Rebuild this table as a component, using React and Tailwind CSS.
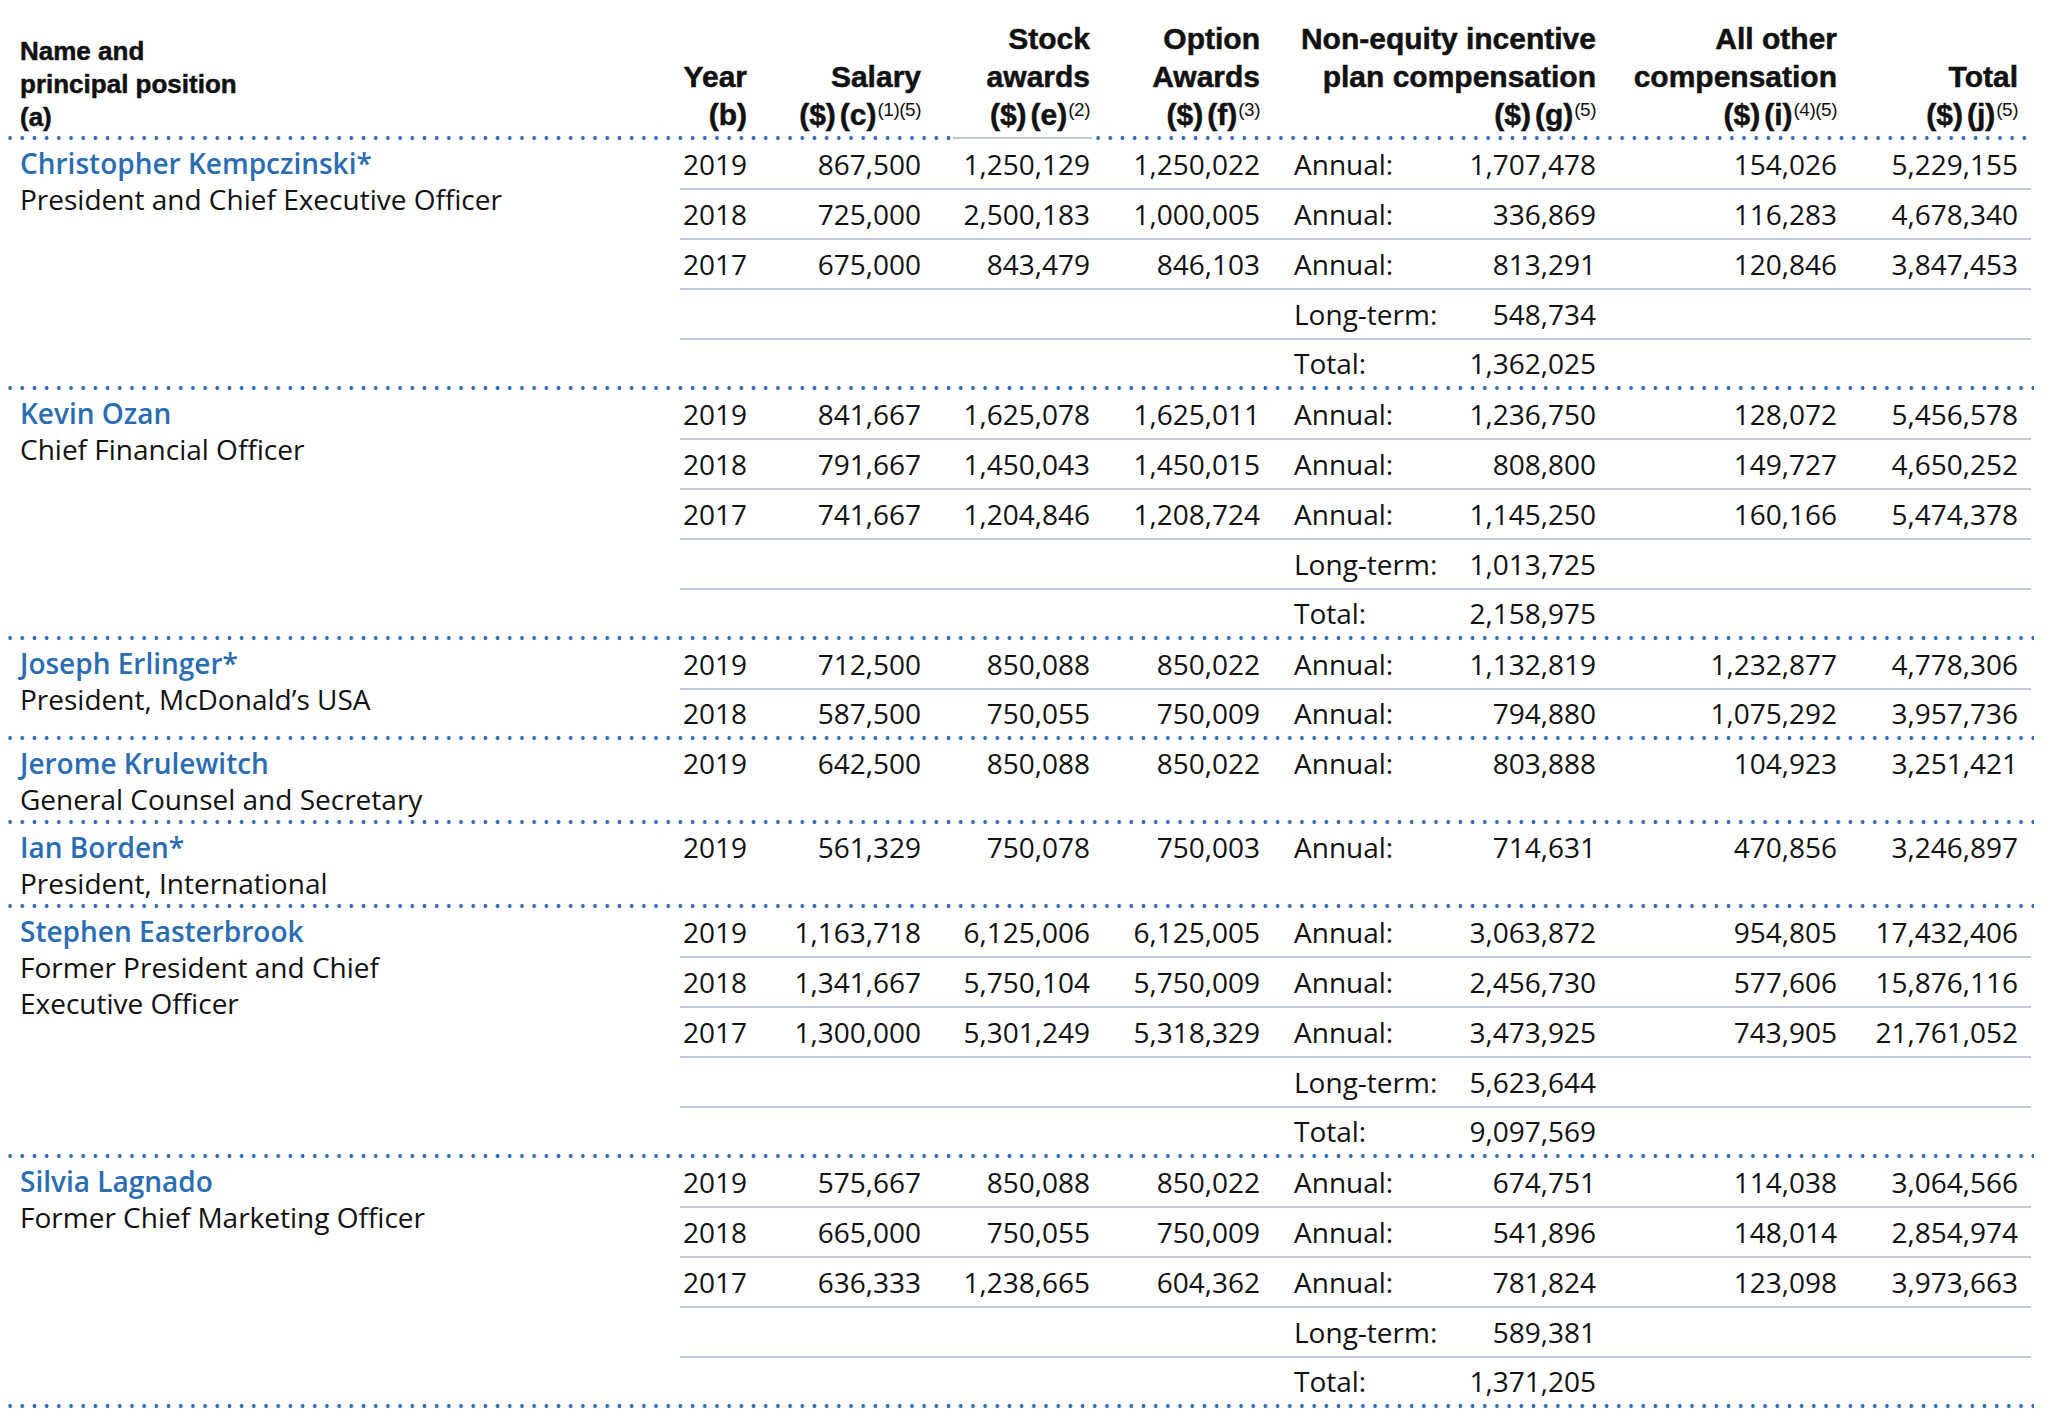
import React from "react";

const people = [
  {
    name: "Christopher Kempczinski*",
    title: ["President and Chief Executive Officer"],
    rows: [
      ["2019", "867,500", "1,250,129", "1,250,022", "Annual:", "1,707,478", "154,026", "5,229,155"],
      ["2018", "725,000", "2,500,183", "1,000,005", "Annual:", "336,869", "116,283", "4,678,340"],
      ["2017", "675,000", "843,479", "846,103", "Annual:", "813,291", "120,846", "3,847,453"],
      ["", "", "", "", "Long-term:", "548,734", "", ""],
      ["", "", "", "", "Total:", "1,362,025", "", ""],
    ],
  },
  {
    name: "Kevin Ozan",
    title: ["Chief Financial Officer"],
    rows: [
      ["2019", "841,667", "1,625,078", "1,625,011", "Annual:", "1,236,750", "128,072", "5,456,578"],
      ["2018", "791,667", "1,450,043", "1,450,015", "Annual:", "808,800", "149,727", "4,650,252"],
      ["2017", "741,667", "1,204,846", "1,208,724", "Annual:", "1,145,250", "160,166", "5,474,378"],
      ["", "", "", "", "Long-term:", "1,013,725", "", ""],
      ["", "", "", "", "Total:", "2,158,975", "", ""],
    ],
  },
  {
    name: "Joseph Erlinger*",
    title: ["President, McDonald’s USA"],
    rows: [
      ["2019", "712,500", "850,088", "850,022", "Annual:", "1,132,819", "1,232,877", "4,778,306"],
      ["2018", "587,500", "750,055", "750,009", "Annual:", "794,880", "1,075,292", "3,957,736"],
    ],
  },
  {
    name: "Jerome Krulewitch",
    title: ["General Counsel and Secretary"],
    rows: [
      ["2019", "642,500", "850,088", "850,022", "Annual:", "803,888", "104,923", "3,251,421"],
    ],
  },
  {
    name: "Ian Borden*",
    title: ["President, International"],
    rows: [
      ["2019", "561,329", "750,078", "750,003", "Annual:", "714,631", "470,856", "3,246,897"],
    ],
  },
  {
    name: "Stephen Easterbrook",
    title: ["Former President and Chief", "Executive Officer"],
    rows: [
      ["2019", "1,163,718", "6,125,006", "6,125,005", "Annual:", "3,063,872", "954,805", "17,432,406"],
      ["2018", "1,341,667", "5,750,104", "5,750,009", "Annual:", "2,456,730", "577,606", "15,876,116"],
      ["2017", "1,300,000", "5,301,249", "5,318,329", "Annual:", "3,473,925", "743,905", "21,761,052"],
      ["", "", "", "", "Long-term:", "5,623,644", "", ""],
      ["", "", "", "", "Total:", "9,097,569", "", ""],
    ],
  },
  {
    name: "Silvia Lagnado",
    title: ["Former Chief Marketing Officer"],
    rows: [
      ["2019", "575,667", "850,088", "850,022", "Annual:", "674,751", "114,038", "3,064,566"],
      ["2018", "665,000", "750,055", "750,009", "Annual:", "541,896", "148,014", "2,854,974"],
      ["2017", "636,333", "1,238,665", "604,362", "Annual:", "781,824", "123,098", "3,973,663"],
      ["", "", "", "", "Long-term:", "589,381", "", ""],
      ["", "", "", "", "Total:", "1,371,205", "", ""],
    ],
  },
];

function Dotted({ className }) {
  return (
    <div
      className={
        "h-[4px] bg-[radial-gradient(circle,#2f6db3_1.7px,transparent_2.1px)] bg-[length:12.2px_4px] bg-repeat-x " +
        className
      }
    />
  );
}

function Sup({ children }) {
  return (
    <span className="relative -top-[9px] align-baseline text-[19px] font-normal leading-none ml-[1px] tracking-[-0.5px] [-webkit-text-stroke:0px]">
      {children}
    </span>
  );
}

function Unit({ letter, sup }) {
  return (
    <>
      ($)<span className="ml-[4px]">({letter})</span>
      {sup ? <Sup>{sup}</Sup> : null}
    </>
  );
}

function HeadCol({ w, lines }) {
  return (
    <div className={"flex flex-col justify-end items-end text-right " + w}>
      {lines.map((l, i) => (
        <div key={i} className="h-[38px] leading-[38px] whitespace-nowrap">
          {l}
        </div>
      ))}
    </div>
  );
}

function DataRow({ r, last }) {
  return (
    <div
      className={
        last
          ? "flex items-center h-[46px] pr-[13px]"
          : "flex items-center h-[50px] border-b-2 border-[#bcc8dc] pr-[13px]"
      }
    >
      <div className="w-[67px] text-right">{r[0]}</div>
      <div className="w-[174px] text-right">{r[1]}</div>
      <div className="w-[169px] text-right">{r[2]}</div>
      <div className="w-[170px] text-right">{r[3]}</div>
      <div className="w-[336px] pl-[34px] flex justify-between">
        <span>{r[4]}</span>
        <span>{r[5]}</span>
      </div>
      <div className="w-[241px] text-right">{r[6]}</div>
      <div className="w-[181px] text-right">{r[7]}</div>
    </div>
  );
}

function Section({ p }) {
  return (
    <div className="flex">
      <div className="w-[680px] pl-[20px] pt-[5px] pb-[3px] leading-[36px]">
        <div className="font-semibold text-[#2a6db3]">{p.name}</div>
        {p.title.map((t, i) => (
          <div key={i}>{t}</div>
        ))}
      </div>
      <div className="w-[1351px] flex flex-col">
        {p.rows.map((r, i) => (
          <DataRow key={i} r={r} last={i === p.rows.length - 1} />
        ))}
      </div>
    </div>
  );
}

export default function App() {
  return (
    <div className="w-[2048px] min-h-[1414px] bg-white text-[#111111]">
      {/* Header */}
      <div className="flex pt-[20px] pb-[2px] font-['Liberation_Sans',Arial,sans-serif] font-bold [-webkit-text-stroke:0.5px_#111111]">
        <div className="w-[680px] pl-[20px] flex flex-col justify-end text-[26px] leading-[33px]">
          <div>Name and</div>
          <div>principal position</div>
          <div>(a)</div>
        </div>
        <div className="flex text-[30px]">
          <HeadCol w="w-[67px]" lines={["Year", "(b)"]} />
          <HeadCol w="w-[174px]" lines={["Salary", <Unit letter="c" sup="(1)(5)" />]} />
          <HeadCol w="w-[169px]" lines={["Stock", "awards", <Unit letter="e" sup="(2)" />]} />
          <HeadCol w="w-[170px]" lines={["Option", "Awards", <Unit letter="f" sup="(3)" />]} />
          <HeadCol
            w="w-[336px]"
            lines={["Non-equity incentive", "plan compensation", <Unit letter="g" sup="(5)" />]}
          />
          <HeadCol
            w="w-[241px]"
            lines={["All other", "compensation", <Unit letter="i" sup="(4)(5)" />]}
          />
          <HeadCol w="w-[181px]" lines={["Total", <Unit letter="j" sup="(5)" />]} />
        </div>
      </div>
      <div className="flex items-center ml-[4px]">
        <Dotted className="w-[949px]" />
        <div className="w-[139px] h-[2px] bg-[#bcc8dc]" />
        <Dotted className="w-[942px]" />
      </div>

      {/* Body */}
      <div className="font-['Open_Sans',sans-serif] text-[28px] leading-[36px]">
        {people.map((p, i) => (
          <div key={i}>
            <Section p={p} />
            <Dotted className="ml-[4px] w-[2030px]" />
          </div>
        ))}
      </div>
    </div>
  );
}
